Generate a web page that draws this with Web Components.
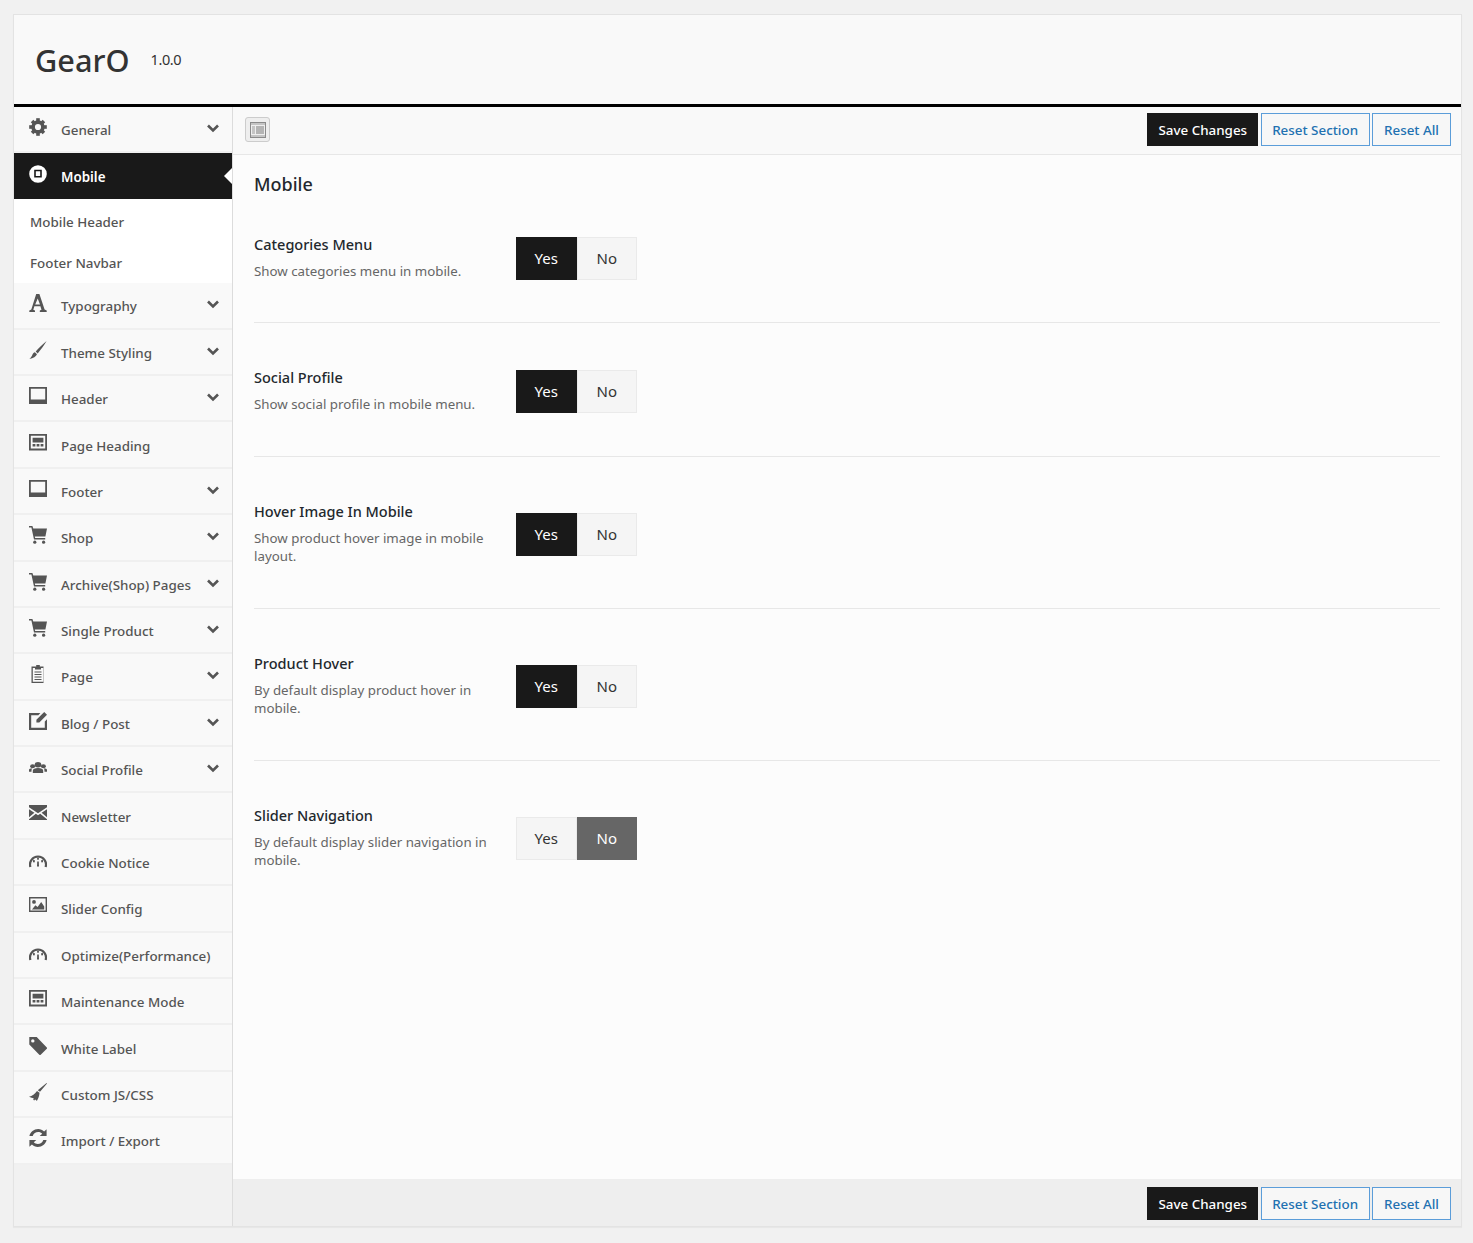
<!DOCTYPE html>
<html>
<head>
<meta charset="utf-8">
<title>GearO</title>
<style>
  html, body { margin: 0; padding: 0; }
  body {
    height: 1243px;
    background: #f1f1f1;
    font-family: "Noto Sans", "Open Sans", sans-serif;
    overflow: hidden;
  }
</style>
</head>
<body>
<gear-panel>
  <span slot="name">GearO</span>
  <span slot="version">1.0.0</span>

  <nav-item slot="nav" icon="gear" caret>General</nav-item>
  <nav-item slot="nav" icon="mobile" active>Mobile</nav-item>
  <nav-sub slot="nav" first>Mobile Header</nav-sub>
  <nav-sub slot="nav">Footer Navbar</nav-sub>
  <nav-item slot="nav" icon="font" caret>Typography</nav-item>
  <nav-item slot="nav" icon="brush" caret>Theme Styling</nav-item>
  <nav-item slot="nav" icon="laptop" caret>Header</nav-item>
  <nav-item slot="nav" icon="screen">Page Heading</nav-item>
  <nav-item slot="nav" icon="laptop" caret>Footer</nav-item>
  <nav-item slot="nav" icon="cart" caret>Shop</nav-item>
  <nav-item slot="nav" icon="cart" caret>Archive(Shop) Pages</nav-item>
  <nav-item slot="nav" icon="cart" caret>Single Product</nav-item>
  <nav-item slot="nav" icon="clipboard" caret>Page</nav-item>
  <nav-item slot="nav" icon="edit" caret>Blog / Post</nav-item>
  <nav-item slot="nav" icon="group" caret>Social Profile</nav-item>
  <nav-item slot="nav" icon="mail">Newsletter</nav-item>
  <nav-item slot="nav" icon="gauge">Cookie Notice</nav-item>
  <nav-item slot="nav" icon="picture">Slider Config</nav-item>
  <nav-item slot="nav" icon="gauge">Optimize(Performance)</nav-item>
  <nav-item slot="nav" icon="screen">Maintenance Mode</nav-item>
  <nav-item slot="nav" icon="tag">White Label</nav-item>
  <nav-item slot="nav" icon="broom">Custom JS/CSS</nav-item>
  <nav-item slot="nav" icon="refresh">Import / Export</nav-item>

  <action-bar slot="top" expand></action-bar>

  <section-title slot="content">Mobile</section-title>
  <option-row slot="content" first heading="Categories Menu" value="yes">Show categories menu in mobile.</option-row>
  <option-row slot="content" heading="Social Profile" value="yes">Show social profile in mobile menu.</option-row>
  <option-row slot="content" heading="Hover Image In Mobile" value="yes">Show product hover image in mobile layout.</option-row>
  <option-row slot="content" heading="Product Hover" value="yes">By default display product hover in mobile.</option-row>
  <option-row slot="content" last heading="Slider Navigation" value="no">By default display slider navigation in mobile.</option-row>

  <action-bar slot="bottom"></action-bar>
</gear-panel>

<script>
const ICONS = {
  gear: `<circle cx="9" cy="9" r="4.9" fill="none" stroke="currentColor" stroke-width="3.6"/>
    <g fill="currentColor">
      <rect x="7.2" y="0.2" width="3.6" height="3.4"/><rect x="7.2" y="14.4" width="3.6" height="3.4"/>
      <rect x="0.2" y="7.2" width="3.4" height="3.6"/><rect x="14.4" y="7.2" width="3.4" height="3.6"/>
      <rect x="7.2" y="0.6" width="3.6" height="3.4" transform="rotate(45 9 9)"/><rect x="7.2" y="14" width="3.6" height="3.4" transform="rotate(45 9 9)"/>
      <rect x="0.6" y="7.2" width="3.4" height="3.6" transform="rotate(45 9 9)"/><rect x="14" y="7.2" width="3.4" height="3.6" transform="rotate(45 9 9)"/>
    </g>`,
  mobile: `<path fill="currentColor" fill-rule="evenodd" d="M9 .2a8.8 8.8 0 1 1 0 17.600A8.800 8.800 0 0 1 9 .2zM5.200 4.800v7.600h7.600V4.800zM6.800 6.300h4.400v4.600H6.800z"/>`,
  font: `<path fill="currentColor" fill-rule="evenodd" d="M7.200 0h3.200l5.200 15.600 2.100.8V18h-6.900v-1.600l1.700-.6-1.100-3.500H5.400l-1.100 3.500 1.700.6V18H.3v-1.600l2-.8zM8.700 4.400 6.200 10.400h4.800z"/>`,
  brush: `<path fill="currentColor" d="M17.600 0C14 3 9.200 7.400 6.700 10.500l2 2C11.200 9.500 15.200 4 17.600 0zM5.900 11.200l2.100 2.100C7.200 15.600 4.200 17.200.4 18c1.600-1.500 2.500-3 3.100-4.500.5-1.200 1.400-2 2.400-2.300z"/>`,
  laptop: `<path fill="currentColor" fill-rule="evenodd" d="M0 0h18v17H0zM1.800 1.700v10.800h14.400V1.700z"/>`,
  screen: `<path fill="currentColor" fill-rule="evenodd" d="M0 0h18v16.400H0zM1.800 1.800v12.800h14.400V1.800zM3.600 3.800h10.800v4.600H3.600zM3.600 10h2.800v2.600H3.600zM7.600 10h2.800v2.600H7.600zM11.600 10h2.800v2.600h-2.800z"/>`,
  cart: `<path fill="currentColor" d="M0 0h3.400l.9 2.400H18l-1.600 8H5.800l.4 1.600h10v1.500H5L2.400 1.500H0z"/><circle cx="5.800" cy="16.200" r="1.600" fill="currentColor"/><circle cx="14.600" cy="16.200" r="1.600" fill="currentColor"/>`,
  clipboard: `<path fill="currentColor" fill-rule="evenodd" d="M7.200 0h3.600v1.600h3.700V18H2.500V1.600h4.700zM3.800 3v13.700h10.400V3h-2.200v1.500H6V3zM5.500 6.500h7v1.100h-7zM5.500 9h7v1.100h-7zM5.500 11.500h7v1.100h-7zM5.500 14h7v1.100h-7z"/>`,
  edit: `<path fill="currentColor" d="M0 1h11.400L9.300 3.200H2.200v12.500h13.600V9.400L18 7.200V18H0zM15.200 0 18 2.800l-7.700 7.800H7.400V7.700z"/>`,
  group: `<g fill="currentColor" transform="translate(0 3) scale(1 .8)"><circle cx="9" cy="4.600" r="3.400"/><circle cx="3.600" cy="6.600" r="2.500"/><circle cx="14.400" cy="6.600" r="2.500"/><path d="M3.800 15v-2.800c0-2.200 2-3.400 5.200-3.400s5.200 1.200 5.200 3.400V15zM0 13.400v-2.200c0-1.300 1.200-2.200 3.300-2.200-.6.900-.8 2-.8 4.400zM18 13.400v-2.200c0-1.300-1.200-2.200-3.300-2.200.6.900.8 2 .8 4.400z"/></g>`,
  mail: `<path fill="currentColor" d="M0 0h18v2.200L9 8.200 0 2.200zM0 4.200l5.400 3.600L0 12.200zM18 4.200v8l-5.400-4.400zM6.800 8.800 9 10.200l2.200-1.400 6.800 5.400V15H0v-.8z"/>`,
  gauge: `<g transform="translate(0 1.500)"><path fill="none" stroke="currentColor" stroke-width="2.200" d="M1.400 14.500A8 8 0 1 1 16.600 14.500"/><g fill="currentColor"><rect x="8.100" y="5" width="1.800" height="2.200"/><rect x="4" y="7.600" width="1.800" height="2.200"/><rect x="12.200" y="7.600" width="1.800" height="2.200"/><path d="M8.200 9h1.600l.2 5H8z"/></g></g>`,
  picture: `<path fill="currentColor" fill-rule="evenodd" d="M0 0h18v15H0zM1.400 1.400v12.200h15.200V1.400zM3 12.400l3.400-4.200 2.200 1.800 3.600-5 3 4.400v3zM5 3a1.900 1.900 0 1 1 0 3.800A1.900 1.900 0 0 1 5 3z"/>`,
  tag: `<path fill="currentColor" fill-rule="evenodd" d="M.3 0h7.400L17.800 10.400c.4.400.4 1 0 1.400l-6.100 6c-.4.400-1 .4-1.400 0L.3 7.600zM3.800 2.200a1.700 1.700 0 1 0 0 3.400 1.700 1.700 0 0 0 0-3.400z"/>`,
  broom: `<path fill="currentColor" d="M17.600 0 18 .5l-7 8.300-2.200-1.600zM8 7.900l2.500 1.900c-.2 3-1 5.800-2.700 8.200-.5-.7-1-1.100-1.800-1.400l-.7 1-1.100-.9.600-1.200c-.7-.5-1.400-.7-2.300-.8L0 13.800C3.200 13 6 10.900 8 7.900z"/>`,
  refresh: `<path fill="currentColor" d="M9.200 0c2.300 0 4.400 1 5.900 2.400L17.600.2V7h-6.900l2.500-2.300c-1-1-2.400-1.700-4-1.700-2.500 0-4.700 1.600-5.500 4H.4C1.300 3.100 4.900 0 9.200 0zM.4 11h6.900l-2.500 2.300c1 1 2.400 1.700 4 1.700 2.500 0 4.700-1.600 5.500-4h3.300c-.9 3.900-4.500 7-8.800 7-2.300 0-4.400-1-5.900-2.400L.4 17.800z"/>`
};

// sidebar row with icon, optional caret; active one gets the dark look
class NavItem extends HTMLElement {
  constructor() {
    super();
    this.shadowDOM = this.attachShadow({ mode: 'open' });
  }

  connectedCallback() {
    const icon = ICONS[this.getAttribute('icon')] || '';
    const caret = this.hasAttribute('caret')
      ? `<svg class="caret" viewBox="0 0 12 9"><path fill="none" stroke="currentColor" stroke-width="2.6" d="M1 1.500 6 6.500 11 1.500"/></svg>`
      : '';
    this.shadowDOM.innerHTML = `
      <style>
        :host {
          display: flex;
          align-items: center;
          box-sizing: border-box;
          height: 46.4px;
          padding: 2px 0 0 15px;
          position: relative;
          background: #f9f9f9;
          border-bottom: 2px solid #f0f0f0;
          color: #555;
          font-size: 13.4px;
          font-weight: 500;
        }
        :host([active]) {
          height: 46px;
          background: #191919;
          border-bottom: 1px solid #191919;
          color: #fff;
          font-weight: 600;
        }
        .icon {
          flex: none;
          width: 18px;
          height: 18px;
          margin-right: 14px;
          position: relative;
          top: -3px;
        }
        .caret {
          position: absolute;
          right: 13px;
          top: 17px;
          width: 12px;
          height: 9px;
        }
        :host([active])::after {
          content: '';
          position: absolute;
          right: 0;
          top: 15px;
          border: 8px solid transparent;
          border-right-color: #fff;
          border-left-width: 0;
        }
      </style>
      <svg class="icon" viewBox="0 0 18 18">${icon}</svg>
      <slot></slot>
      ${caret}
    `;
  }
}

class NavSub extends HTMLElement {
  constructor() {
    super();
    this.shadowDOM = this.attachShadow({ mode: 'open' });
    this.shadowDOM.innerHTML = `
      <style>
        :host {
          display: flex;
          align-items: center;
          box-sizing: border-box;
          height: 41.9px;
          padding: 1px 0 0 16px;
          background: #fff;
          color: #555;
          font-size: 13.4px;
          font-weight: 500;
        }
        :host([first]) { padding-top: 3px; }
      </style>
      <slot></slot>
    `;
  }
}

class ActionBar extends HTMLElement {
  constructor() {
    super();
    this.shadowDOM = this.attachShadow({ mode: 'open' });
  }

  connectedCallback() {
    const expand = this.hasAttribute('expand')
      ? `<button class="expand" aria-label="Expand"><svg viewBox="0 0 16 16" width="16" height="16"><path fill="#8a8a8a" fill-rule="evenodd" d="M0 0h16v16H0zM1 1v14h14V1z"/><rect x="1" y="1" width="14" height="2" fill="#c4c4c4"/><rect x="1" y="13" width="14" height="2" fill="#c4c4c4"/><rect x="2" y="4" width="3" height="8" fill="#c4c4c4"/><rect x="6" y="4" width="8" height="8" fill="#b4b4b4"/></svg></button>`
      : '';
    this.shadowDOM.innerHTML = `
      <style>
        :host {
          display: flex;
          align-items: center;
          gap: 2.5px;
          box-sizing: border-box;
          height: 48px;
          padding: 0 10px 0 12px;
          font-size: 13.4px;
        }
        :host([expand]) {
          background: #f9f9f9;
          border-bottom: 1px solid #e7e7e7;
          padding-bottom: 2px;
        }
        :host(:not([expand])) {
          height: 47px;
          background: #eee;
          padding-top: 2px;
        }
        .expand {
          margin-right: auto;
          width: 25px;
          height: 25px;
          padding: 0;
          display: flex;
          align-items: center;
          justify-content: center;
          background: #eee;
          border: 1px solid #ccc;
          border-radius: 3px;
        }
        .btn {
          box-sizing: border-box;
          height: 33px;
          padding: 0 11px;
          font: inherit;
          font-weight: 500;
          border-radius: 0;
          white-space: nowrap;
        }
        .save {
          padding: 0 10px;
          background: #191919;
          border: 1px solid #191919;
          color: #fff;
        }
        .reset {
          background: #f7f7f7;
          border: 1px solid #5b9dd9;
          color: #2271b1;
        }
        .section { padding: 0 10.5px; }
        :host(:not([expand])) .spacer { margin-left: auto; }
      </style>
      ${expand}
      <span class="spacer"></span>
      <button class="btn save">Save Changes</button>
      <button class="btn reset section">Reset Section</button>
      <button class="btn reset">Reset All</button>
    `;
  }
}

class SectionTitle extends HTMLElement {
  constructor() {
    super();
    this.shadowDOM = this.attachShadow({ mode: 'open' });
    this.shadowDOM.innerHTML = `
      <style>
        :host {
          display: block;
          box-sizing: border-box;
          height: 79px;
          padding-top: 16px;
          line-height: 26px;
          color: #23282d;
          font-size: 18px;
          font-weight: 500;
        }
      </style>
      <slot></slot>
    `;
  }
}

class ToggleSwitch extends HTMLElement {
  constructor() {
    super();
    this.shadowDOM = this.attachShadow({ mode: 'open' });
  }

  connectedCallback() {
    const yes = this.getAttribute('value') === 'yes';
    this.shadowDOM.innerHTML = `
      <style>
        :host {
          display: flex;
          width: 121px;
          height: 43px;
          font-size: 15px;
        }
        span {
          flex: 1;
          display: flex;
          align-items: center;
          justify-content: center;
          box-sizing: border-box;
          padding-bottom: 2px;
          background: #f5f5f5;
          border: 1px solid #eaeaea;
          color: #333;
        }
        .on-yes { background: #191919; border-color: #191919; color: #fff; }
        .on-no { background: #666; border-color: #666; color: #fff; }
      </style>
      <span class="${yes ? 'on-yes' : ''}">Yes</span>
      <span class="${yes ? '' : 'on-no'}">No</span>
    `;
  }
}

class OptionRow extends HTMLElement {
  constructor() {
    super();
    this.shadowDOM = this.attachShadow({ mode: 'open' });
  }

  connectedCallback() {
    this.shadowDOM.innerHTML = `
      <style>
        :host {
          display: flex;
          align-items: center;
          padding: 44px 0 43px;
          border-bottom: 1px solid #e7e7e7;
        }
        :host([first]) { padding: 0 0 42px; }
        :host([last]) { border-bottom: 0; }
        .text { width: 262px; flex: none; box-sizing: border-box; padding-right: 24px; }
        .heading {
          line-height: 20px;
          margin-bottom: 8px;
          color: #23282d;
          font-size: 14.500px;
          font-weight: 500;
        }
        .desc {
          line-height: 18px;
          color: #666;
          font-size: 13.300px;
        }
        toggle-switch { margin-top: 3px; }
      </style>
      <div class="text">
        <div class="heading">${this.getAttribute('heading')}</div>
        <div class="desc"><slot></slot></div>
      </div>
      <toggle-switch value="${this.getAttribute('value')}"></toggle-switch>
    `;
  }
}

class GearPanel extends HTMLElement {
  constructor() {
    super();
    this.shadowDOM = this.attachShadow({ mode: 'open' });
    this.shadowDOM.innerHTML = `
      <style>
        :host {
          display: flex;
          flex-direction: column;
          box-sizing: border-box;
          height: 1213px;
          margin: 14px 11px 0 13px;
          border: 1px solid #e3e3e3;
          background: #fcfcfc;
          box-shadow: 0 1px 1px rgba(0, 0, 0, .04);
        }
        .head {
          display: flex;
          align-items: center;
          flex: none;
          box-sizing: border-box;
          height: 92px;
          padding: 0 22px 0 21px;
          background: #f9f9f9;
          border-bottom: 3px solid #000;
          color: #333;
        }
        .name { font-size: 30.700px; font-weight: 500; margin-right: 21px; }
        .version { font-size: 14.500px; letter-spacing: -.4px; position: relative; top: -1px; }
        .body { flex: 1; display: flex; min-height: 0; }
        .side {
          flex: none;
          width: 218px;
          background: #f1f1f1;
          border-right: 1px solid #dcdcdc;
        }
        .main { flex: 1; display: flex; flex-direction: column; min-width: 0; }
        .content { flex: 1; padding: 0 21px; }
      </style>
      <div class="head">
        <div class="name"><slot name="name"></slot></div>
        <div class="version"><slot name="version"></slot></div>
      </div>
      <div class="body">
        <div class="side"><slot name="nav"></slot></div>
        <div class="main">
          <slot name="top"></slot>
          <div class="content"><slot name="content"></slot></div>
          <slot name="bottom"></slot>
        </div>
      </div>
    `;
  }
}

customElements.define('nav-item', NavItem);
customElements.define('nav-sub', NavSub);
customElements.define('action-bar', ActionBar);
customElements.define('section-title', SectionTitle);
customElements.define('toggle-switch', ToggleSwitch);
customElements.define('option-row', OptionRow);
customElements.define('gear-panel', GearPanel);
</script>
</body>
</html>
